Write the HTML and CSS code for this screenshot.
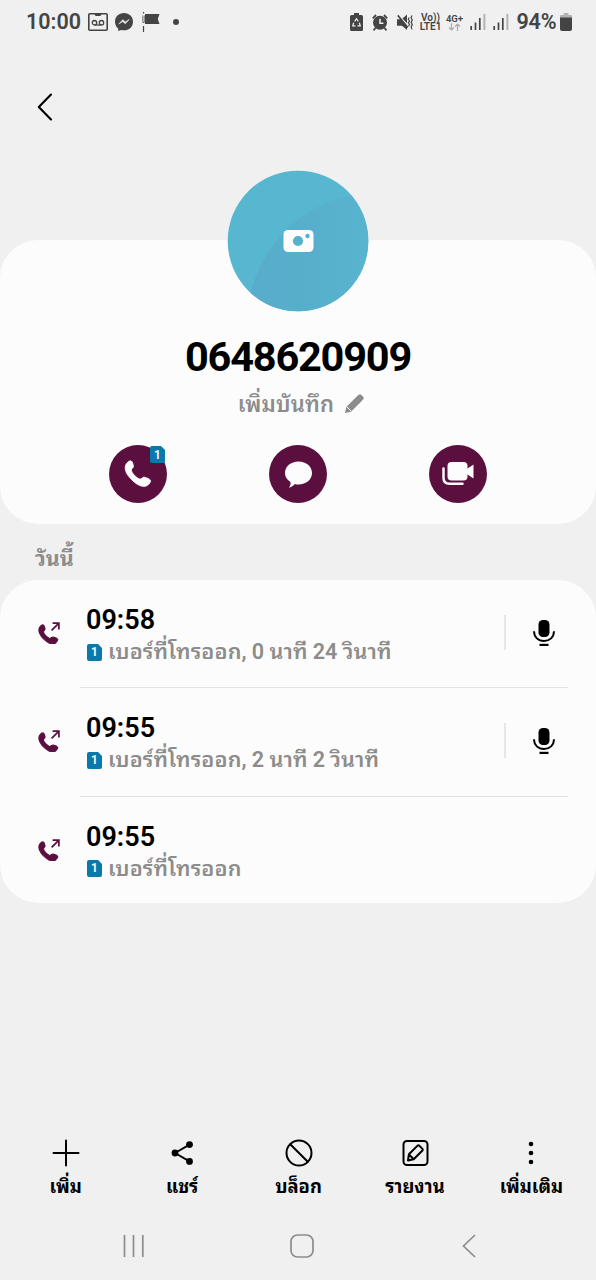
FILE: index.html
```html
<!DOCTYPE html>
<html lang="th">
<head>
<meta charset="utf-8">
<title>0648620909</title>
<link rel="stylesheet" href="styles.css">
</head>
<body>
<svg width="0" height="0" class="defs">
  <defs>
    <path id="handset" d="M2.200 3.100C3.400 1.600 5.200.3 6.500 1c1.100.6 1.700 3 2.100 4.700.3 1.600-1.500 2.400-1.900 3.600-.4 1.300 1.200 3.800 3 5.600 1.900 1.900 4.300 3.700 5.700 3.400 1.300-.3 2.100-2 3.700-1.700 1.700.3 5.300 1.700 5.900 2.900.7 1.400-1 3.300-2.500 4.700-1.900 1.800-5.700 1.600-9.300-.3C9.800 22.100 4 17 1.700 12.100.1 8.500.4 5.200 2.200 3.100Z"/>
    <g id="call-out">
      <use href="#handset" transform="translate(.4 2.300) scale(.77)" stroke="currentColor" stroke-width="1.400"/>
      <path d="M13.600 8.400 20.700 1.300M14.600 1.200h6.300v6.400" fill="none" stroke="currentColor" stroke-width="1.700"/>
    </g>
    <g id="mic">
      <rect x="5.500" y="0" width="11" height="17" rx="4.500"/>
      <path d="M1 11.300c0 5.800 4.300 9.700 10 9.700s10-3.900 10-9.700" fill="none" stroke="currentColor" stroke-width="1.900"/>
      <path d="M6.500 24.900h9" stroke="currentColor" stroke-width="2.200"/>
    </g>
    <g id="bars">
      <path d="M1.200 17v-4M5.500 17V9.500M9.800 17V5" stroke="#444" stroke-width="1.700"/>
      <path d="M14.400 17V1" stroke="#b3b3b3" stroke-width="2"/>
    </g>
  </defs>
</svg>

<header class="status">
  <div class="status-left">
    <span class="clock">10:00</span>
    <svg class="ic-tape" width="20" height="18" viewBox="0 0 20 18"><rect x=".8" y=".8" width="18.400" height="16.400" rx="1" fill="none" stroke="currentColor" stroke-width="1.600"/><path d="M6 0h8l-1.500 3h-5z"/><g fill="none" stroke="currentColor" stroke-width="1.300"><circle cx="6.500" cy="9.700" r="2.200"/><circle cx="13.500" cy="9.700" r="2.200"/><path d="M6.500 12h7"/></g></svg>
    <svg class="ic-messenger" width="18" height="18" viewBox="0 0 18 18"><path d="M9 0c5.200 0 9 3.700 9 8.700s-3.800 8.600-9 8.600c-1 0-2-.1-2.800-.4L3.300 18l-.1-2.500C1.200 13.900 0 11.500 0 8.700 0 3.700 3.800 0 9 0Z"/><path d="m3.800 11 4-4.300 2.600 2.200 3.800-2.500-3.900 4.300-2.600-2.100z" fill="#f0f0f0" stroke="#f0f0f0" stroke-width=".6"/></svg>
    <svg class="ic-flag" width="18" height="20" viewBox="0 0 18 20"><path d="M3 2h14.500L15.800 7l1.700 5H3z"/><path d="M1.500 0v1.500M1.500 14v6" stroke="currentColor" stroke-width="1.200"/><path d="M.8 3.500v7h1.500v-7" fill="none" stroke="currentColor" stroke-width=".7"/></svg>
    <span class="dot"></span>
  </div>
  <div class="status-right">
    <svg width="13" height="18" viewBox="0 0 13 18"><path d="M4 0h5v2h2.500q1.500 0 1.500 1.500v13q0 1.500-1.500 1.500h-10Q0 18 0 16.500v-13Q0 2 1.500 2H4z"/><path d="m4.700 8.300 1.800-2.600 1.800 2.600M9.300 9.800l1 3H7.500M3.700 9.800l-1 3h2.800" fill="none" stroke="#f0f0f0" stroke-width="1.200"/></svg>
    <svg class="ic-alarm" width="16" height="17" viewBox="0 0 16 17"><circle cx="8" cy="8.700" r="7"/><path d="M.8 4.300 4 1M12 1l3.200 3.300M3.500 14l-2 2.400M12.500 14l2 2.400" stroke="currentColor" stroke-width="1.800"/><path d="M8 4.800v4.500h3.400" fill="none" stroke="#f0f0f0" stroke-width="1.500"/></svg>
    <svg class="ic-mute" width="16" height="17" viewBox="0 0 16 17"><path d="M0 5.200h3.200L10 12.500V16L5 11.800H0zM5.500 4.500 10 .5v8.800zM.2 1.900 1.400.8l10 12.200-1.200 1.100z"/><path d="m12.200 3.500-.9 1.800 1.200 1.700-1.200 1.800 1.200 1.700-1 1.700M15 1.500l-.9 2.200L15.300 6l-1.200 2.300 1.200 2.300-1.200 2.300.9 2.500" fill="none" stroke="currentColor" stroke-width="1.200"/></svg>
    <span class="tiny volte"><span>Vo))</span><span>LTE1</span></span>
    <span class="tiny net"><span>4G+</span><svg width="13" height="8" viewBox="0 0 13 8"><path d="M3.500 0v7M1 4.500 3.500 7 6 4.500M9.500 8V1M7 3.500 9.500 1 12 3.500" fill="none" stroke="#aaa" stroke-width="1.200"/></svg></span>
    <svg class="ic-bars" width="16" height="18"><use href="#bars"/></svg>
    <svg class="ic-bars2" width="16" height="18"><use href="#bars"/></svg>
    <span class="pct">94%</span>
    <svg class="ic-batt" width="12" height="18" viewBox="0 0 12 18"><path d="M3.500 0h5v2H11q1 0 1 1v3H0V3q0-1 1-1h2.500z" fill="#b3b3b3"/><path d="M0 4.500h12V16q0 2-2 2H2q-2 0-2-2z"/></svg>
  </div>
</header>

<nav class="top"><svg width="16" height="28" viewBox="0 0 16 28"><path d="M14 1.500 1.800 14 14 26.500" fill="none" stroke="#000" stroke-width="2.100" stroke-linecap="round" stroke-linejoin="round"/></svg></nav>

<main>
  <section class="card profile">
    <svg class="avatar" width="142" height="142" viewBox="0 0 142 142">
      <defs>
        <clipPath id="disc"><circle cx="71" cy="71" r="70.300"/></clipPath>
        <linearGradient id="shade"><stop offset="0" stop-color="#57accb"/><stop offset=".25" stop-color="#57afcc"/><stop offset=".48" stop-color="#58b5cf"/></linearGradient>
      </defs>
      <g clip-path="url(#disc)"><rect width="142" height="142" fill="#57b7d0"/><circle cx="152" cy="154" r="132" fill="url(#shade)"/></g>
      <rect x="56.500" y="60" width="30" height="22" rx="4.500" fill="#fcfcfc"/><circle cx="71" cy="71" r="5.100" fill="#57b0cc"/><circle cx="80.500" cy="66" r="2.200" fill="#57b0cc"/>
    </svg>
    <h1>0648620909</h1>
    <div class="note"><span>เพิ่มบันทึก</span><svg width="20" height="20" viewBox="0 0 20 20"><path d="m1 19 1.300-6L12.500 2.800l4.700 4.700L7 17.700zM12.500 2.800 14.700.7q1.300-1.100 2.600.2l1.800 1.800q1.300 1.300.2 2.600l-2.100 2.200z"/><path d="M2.500 12.500 7 17" stroke="#fcfcfc"/></svg></div>
    <div class="actions">
      <div class="action"><svg width="28" height="28" viewBox="-.5 0 27 27"><use href="#handset" stroke="currentColor" stroke-width=".8"/></svg><svg class="sim-badge" width="15" height="17" viewBox="0 0 15 17"><path d="M2 0h9l4 4v11q0 2-2 2H2q-2 0-2-2V2q0-2 2-2z"/><text x="7.500" y="12.600">1</text></svg></div>
      <div class="action"><svg width="28" height="28" viewBox="0 0 28 28"><path d="M14.500 1.500C22.300 1.500 28 6.500 28 13s-5.700 11.500-13.500 11.500q-2 0-3.600-.5-1.800 2.500-6 3.900 2.200-2.400 1.600-5.900Q1 18.500 1 13C1 6.500 6.700 1.500 14.500 1.500Z"/></svg></div>
      <div class="action"><svg width="32" height="24" viewBox="0 0 32 24"><rect x="5.500" y="0" width="20" height="18.500" rx="4"/><path d="m24 7.500 7.500-4.900v13.800l-7.500-4.900z"/><path d="M1.500 6.500v9.200q0 6 6 6h13" fill="none" stroke="currentColor" stroke-width="2.500" stroke-linecap="round"/></svg></div>
    </div>
  </section>

  <h2>วันนี้</h2>

  <section class="card log">
    <article class="call">
      <svg class="call-icon" width="22" height="22" viewBox="0 0 22 22"><use href="#call-out"/></svg>
      <div class="call-body">
        <div class="call-text"><div class="time">09:58</div><div class="detail"><svg class="sim" width="15" height="17" viewBox="0 0 15 17"><path d="M2 0h9l4 4v11q0 2-2 2H2q-2 0-2-2V2q0-2 2-2z"/><text x="7.500" y="12.400">1</text></svg><span>เบอร์ที่โทรออก, 0 นาที 24 วินาที</span></div></div>
        <div class="record"><svg width="22" height="27" viewBox="0 0 22 27"><use href="#mic"/></svg></div>
      </div>
    </article>
    <article class="call">
      <svg class="call-icon" width="22" height="22" viewBox="0 0 22 22"><use href="#call-out"/></svg>
      <div class="call-body">
        <div class="call-text"><div class="time">09:55</div><div class="detail"><svg class="sim" width="15" height="17" viewBox="0 0 15 17"><path d="M2 0h9l4 4v11q0 2-2 2H2q-2 0-2-2V2q0-2 2-2z"/><text x="7.500" y="12.400">1</text></svg><span>เบอร์ที่โทรออก, 2 นาที 2 วินาที</span></div></div>
        <div class="record"><svg width="22" height="27" viewBox="0 0 22 27"><use href="#mic"/></svg></div>
      </div>
    </article>
    <article class="call">
      <svg class="call-icon" width="22" height="22" viewBox="0 0 22 22"><use href="#call-out"/></svg>
      <div class="call-body">
        <div class="call-text"><div class="time">09:55</div><div class="detail"><svg class="sim" width="15" height="17" viewBox="0 0 15 17"><path d="M2 0h9l4 4v11q0 2-2 2H2q-2 0-2-2V2q0-2 2-2z"/><text x="7.500" y="12.400">1</text></svg><span>เบอร์ที่โทรออก</span></div></div>
      </div>
    </article>
  </section>
</main>

<footer>
  <div class="tools">
    <div class="tool"><svg viewBox="0 0 28 28"><path d="M14 1.500v25M1.500 14h25"/></svg><span>เพิ่ม</span></div>
    <div class="tool"><svg viewBox="0 0 28 28"><path d="M21.500 5.600 7 14l14.500 8.400"/><g fill="#000" stroke="none"><circle cx="21.500" cy="5.600" r="3.400"/><circle cx="7" cy="14" r="3.400"/><circle cx="21.500" cy="22.400" r="3.400"/></g></svg><span>แชร์</span></div>
    <div class="tool"><svg viewBox="0 0 28 28"><circle cx="14" cy="14" r="12.500"/><path d="m5.200 5.200 17.600 17.600"/></svg><span>บล็อก</span></div>
    <div class="tool"><svg viewBox="0 0 28 28"><rect x="2.500" y="2" width="24" height="24" rx="3.500"/><path d="m7 21.500.9-6.200 8.400-8.400q1.100-1.100 2.200 0l2.700 2.700q1.100 1.100 0 2.200l-8.500 8.400zM8 15.500l4.500 4.500"/></svg><span>รายงาน</span></div>
    <div class="tool"><svg viewBox="0 0 28 28"><g fill="#000" stroke="none"><circle cx="14" cy="5" r="2.300"/><circle cx="14" cy="14" r="2.300"/><circle cx="14" cy="23" r="2.300"/></g></svg><span>เพิ่มเติม</span></div>
  </div>
  <div class="sysnav">
    <svg width="24" height="24" viewBox="0 0 24 24"><path d="M2.500 1v22M11.500 1v22M20.800 1v22"/></svg>
    <svg width="24" height="24" viewBox="0 0 24 24"><rect x="1" y="1" width="22" height="22" rx="6.500"/></svg>
    <svg width="24" height="24" viewBox="0 0 24 24"><path d="M18 1 6.500 12 18 23"/></svg>
  </div>
</footer>
</body>
</html>
```
FILE: styles.css
```css
* { box-sizing: border-box; }
body {
  margin: 0;
  width: 596px;
  height: 1280px;
  overflow: hidden;
  background: #f0f0f0;
  color: #000;
  font-family: Roboto, "Droid Sans Thai", "Noto Sans Thai Looped", "Noto Looped Thai", "Noto Sans Thai", "Noto Sans", sans-serif;
  display: flex;
  flex-direction: column;
}
svg { display: block; flex: none; }
.defs { position: absolute; }

.status { height: 44px; padding: 0 24.500px 0 26px; display: flex; justify-content: space-between; align-items: center; color: #444; }
.status svg { fill: currentColor; }
.status-left, .status-right { display: flex; align-items: center; }
.clock { font-size: 21.500px; font-weight: 600; line-height: 44px; width: 54px; }
.ic-tape { margin-left: 8px; }
.ic-messenger { margin-left: 7px; }
.ic-flag { margin-left: 9px; }
.dot { width: 6px; height: 6px; border-radius: 50%; background: currentColor; margin-left: 13px; }
.ic-alarm { margin-left: 9px; }
.ic-mute { margin-left: 9px; }
.tiny { display: flex; flex-direction: column; align-items: center; font-size: 10px; line-height: 9px; font-weight: 600; }
.volte { width: 22px; margin-left: 7px; }
.net { width: 18px; margin-left: 4px; font-size: 9.500px; }
.ic-bars { margin-left: 6px; }
.ic-bars2 { margin-left: 7px; }
.pct { width: 40px; margin-left: 8px; font-size: 21.500px; font-weight: 600; line-height: 44px; letter-spacing: -.2px; }
.ic-batt { margin-left: 3px; }

.top { height: 196px; padding: 49px 0 0 37px; }

.card { background: #fcfcfc; border-radius: 38px; }
.profile { height: 284px; display: flex; flex-direction: column; align-items: center; }
.avatar { margin-top: -70px; }
h1 { margin: 18.500px 0 0; font-size: 41.500px; line-height: 52px; font-weight: 700; letter-spacing: -1.200px; }
.note { display: flex; align-items: center; gap: 10px; height: 30px; margin: 6.500px 0 0 6px; color: #8c8c8c; fill: #8c8c8c; font-size: 22px; line-height: 31px; font-weight: 600; letter-spacing: .2px; }
.actions { display: flex; gap: 102px; margin-top: 26px; }
.action { position: relative; width: 58px; height: 58px; border-radius: 50%; background: #5b0f3f; color: #fcfcfc; fill: #fcfcfc; display: flex; align-items: center; justify-content: center; }
.sim-badge { position: absolute; right: 2px; top: 1px; }
.sim-badge path, .sim path { fill: #0879ad; }
.sim-badge text, .sim text { fill: #fff; font-size: 12px; font-weight: 600; letter-spacing: 0; text-anchor: middle; }

h2 { margin: 0; height: 56px; padding: 16px 0 0 35px; font-size: 21.500px; line-height: 38px; font-weight: 700; color: #8c8c8c; }

.log { height: 323px; display: flex; flex-direction: column; }
.call { flex: none; display: flex; height: 108.300px; padding: 0 28px 0 38px; }
.call-icon { margin-top: 42px; color: #5b0f3f; fill: #5b0f3f; }
.call-body { flex: 1; margin-left: 20px; padding-left: 6px; display: flex; border-bottom: 1.500px solid #e2e2e2; }
.call:last-child .call-body { border-bottom: 0; }
.call-text { flex: 1; padding-top: 23px; }
.time { font-size: 27px; line-height: 34px; font-weight: 600; }
.detail { display: flex; align-items: center; gap: 6px; height: 30px; padding-left: 1px; color: #8c8c8c; font-size: 21.600px; line-height: 30px; font-weight: 600; letter-spacing: .1px; word-spacing: -.3px; white-space: nowrap; }
.record { width: 64px; height: 35px; margin-top: 35px; padding: 5px 0 0 26.500px; border-left: 2px solid #e6e6e6; }

footer { margin-top: auto; height: 142px; }
.tools { display: flex; padding: 0 6.500px 0 7.500px; }
.tool { flex: 1; display: flex; flex-direction: column; align-items: center; gap: 4px; font-size: 18.400px; line-height: 31px; font-weight: 700; white-space: nowrap; }
.tool svg { width: 28px; height: 28px; margin-top: 1px; fill: none; stroke: #000; stroke-width: 2; stroke-linejoin: round; stroke-linecap: round; }
.sysnav { display: flex; justify-content: space-between; padding: 32px 115px 0 122px; }
.sysnav svg { fill: none; stroke: #8c8c8c; stroke-width: 1.700; }
```
